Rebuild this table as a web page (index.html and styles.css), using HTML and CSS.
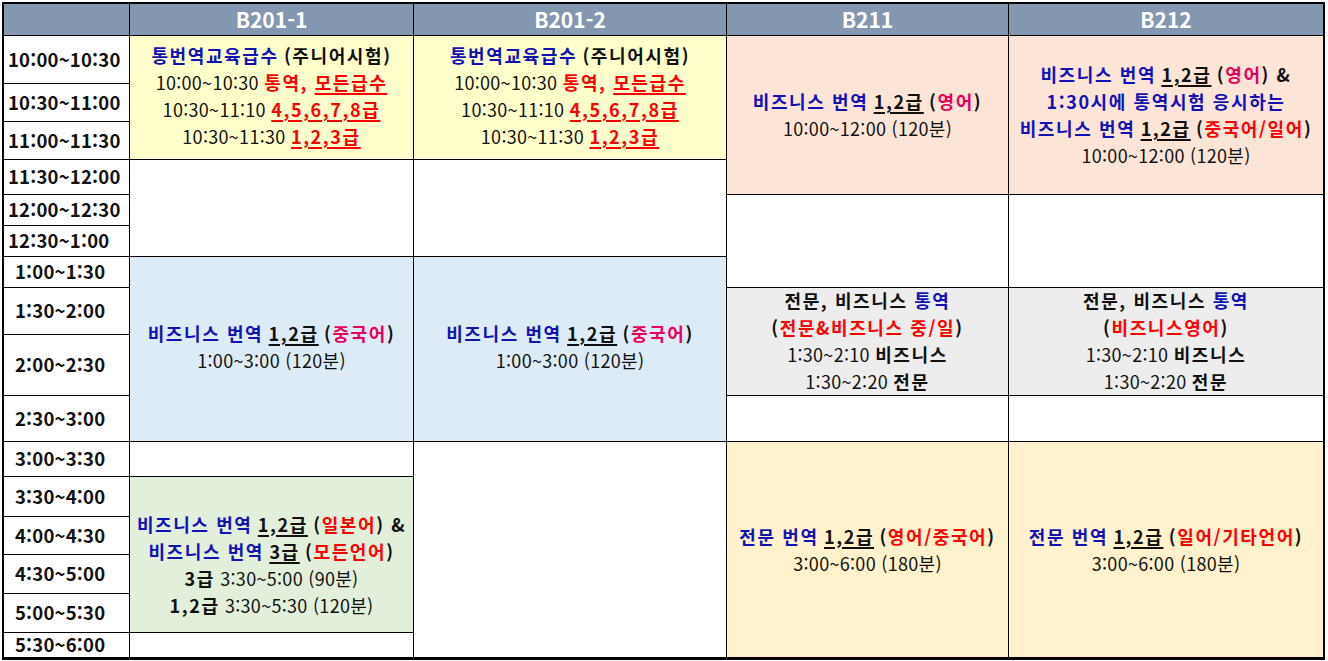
FILE: index.html
```html
<!DOCTYPE html>
<html lang="ko">
<head>
<meta charset="utf-8">
<title>시험 시간표</title>
<link rel="stylesheet" href="styles.css">
</head>
<body>
<div class="sheet">
  <div class="hd corner"></div>
  <div class="hd">B201-1</div>
  <div class="hd">B201-2</div>
  <div class="hd">B211</div>
  <div class="hd">B212</div>

  <div class="t r2">10:00~10:30</div>
  <div class="t r3">10:30~11:00</div>
  <div class="t r4">11:00~11:30</div>
  <div class="t r5">11:30~12:00</div>
  <div class="t r6">12:00~12:30</div>
  <div class="t r7">12:30~1:00</div>
  <div class="t r8 sp">1:00~1:30</div>
  <div class="t r9 sp">1:30~2:00</div>
  <div class="t r10 sp">2:00~2:30</div>
  <div class="t r11 sp">2:30~3:00</div>
  <div class="t r12 sp">3:00~3:30</div>
  <div class="t r13 sp">3:30~4:00</div>
  <div class="t r14 sp">4:00~4:30</div>
  <div class="t r15 sp">4:30~5:00</div>
  <div class="t r16 sp">5:00~5:30</div>
  <div class="t r17 sp">5:30~6:00</div>

  <!-- B201-1 -->
  <div class="c c2 yellow s-junior">
    <p><b class="blue">통번역교육급수</b> <b>(주니어시험)</b></p>
    <p>10:00~10:30 <b class="red">통역, <u>모든급수</u></b></p>
    <p>10:30~11:10 <b class="red"><u>4,5,6,7,8급</u></b></p>
    <p>10:30~11:30 <b class="red"><u>1,2,3급</u></b></p>
  </div>
  <div class="c c2 white s-lunch"></div>
  <div class="c c2 blue-bg s-biz">
    <p><b class="blue">비즈니스 번역</b> <b><u>1,2급</u></b> <b>(<span class="pink">중국어</span>)</b></p>
    <p>1:00~3:00 (120분)</p>
  </div>
  <div class="c c2 white s-r12"></div>
  <div class="c c2 green s-green">
    <p><b class="blue">비즈니스 번역</b> <b><u>1,2급</u></b> <b>(<span class="red">일본어</span>) &amp;</b></p>
    <p><b class="blue">비즈니스 번역</b> <b><u>3급</u></b> <b>(<span class="red">모든언어</span>)</b></p>
    <p><b>3급</b> 3:30~5:00 (90분)</p>
    <p><b>1,2급</b> 3:30~5:30 (120분)</p>
  </div>
  <div class="c c2 white s-r17"></div>

  <!-- B201-2 -->
  <div class="c c3 yellow s-junior">
    <p><b class="blue">통번역교육급수</b> <b>(주니어시험)</b></p>
    <p>10:00~10:30 <b class="red">통역, <u>모든급수</u></b></p>
    <p>10:30~11:10 <b class="red"><u>4,5,6,7,8급</u></b></p>
    <p>10:30~11:30 <b class="red"><u>1,2,3급</u></b></p>
  </div>
  <div class="c c3 white s-lunch"></div>
  <div class="c c3 blue-bg s-biz">
    <p><b class="blue">비즈니스 번역</b> <b><u>1,2급</u></b> <b>(<span class="pink">중국어</span>)</b></p>
    <p>1:00~3:00 (120분)</p>
  </div>
  <div class="c c3 white s-after"></div>

  <!-- B211 -->
  <div class="c c4 peach s-morning">
    <p><b class="blue">비즈니스 번역</b> <b><u>1,2급</u></b> <b>(<span class="pink">영어</span>)</b></p>
    <p>10:00~12:00 (120분)</p>
  </div>
  <div class="c c4 white s-mid"></div>
  <div class="c c4 gray s-interp">
    <p><b>전문, 비즈니스 </b><b class="blue">통역</b></p>
    <p><b>(<span class="red">전문&amp;비즈니스 중/일</span>)</b></p>
    <p>1:30~2:10 <b>비즈니스</b></p>
    <p>1:30~2:20 <b>전문</b></p>
  </div>
  <div class="c c4 white s-r11"></div>
  <div class="c c4 cream s-after">
    <p><b class="blue">전문 번역</b> <b><u>1,2급</u></b> <b>(<span class="red">영어/중국어</span>)</b></p>
    <p>3:00~6:00 (180분)</p>
  </div>

  <!-- B212 -->
  <div class="c c5 peach s-morning">
    <p><b class="blue">비즈니스 번역</b> <b><u>1,2급</u></b> <b>(<span class="pink">영어</span>) &amp;</b></p>
    <p><b class="blue">1:30시에 통역시험 응시하는</b></p>
    <p><b class="blue">비즈니스 번역</b> <b><u>1,2급</u></b> <b>(<span class="red">중국어/일어</span>)</b></p>
    <p>10:00~12:00 (120분)</p>
  </div>
  <div class="c c5 white s-mid"></div>
  <div class="c c5 gray s-interp">
    <p><b>전문, 비즈니스 </b><b class="blue">통역</b></p>
    <p><b>(<span class="red">비즈니스영어</span>)</b></p>
    <p>1:30~2:10 <b>비즈니스</b></p>
    <p>1:30~2:20 <b>전문</b></p>
  </div>
  <div class="c c5 white s-r11"></div>
  <div class="c c5 cream s-after">
    <p><b class="blue">전문 번역</b> <b><u>1,2급</u></b> <b>(<span class="red">일어/기타언어</span>)</b></p>
    <p>3:00~6:00 (180분)</p>
  </div>
</div>
</body>
</html>
```

FILE: styles.css
```css
html, body {
  margin: 0;
  padding: 0;
  background: #ffffff;
}

body {
  font-family: "Noto Sans CJK KR", "Noto Sans", sans-serif;
  color: #111;
}

.sheet {
  display: grid;
  grid-template-columns: 125px 283px 312px 281px 314px;
  grid-template-rows: 31px 47px 37px 37px 34px 30px 30px 30px 46px 60px 45px 34px 39px 37px 38px 38px 24px;
  gap: 1px;
  background: #000;
  border: 2px solid #000;
  border-bottom-width: 3px;
  width: max-content;
  margin: 2px 0 0 2px;
}

.hd {
  background: #8497b0;
  color: #fff;
  font-weight: 700;
  font-size: 21px;
  display: flex;
  align-items: center;
  justify-content: center;
  line-height: 1;
}

.t {
  grid-column: 1;
  background: #fff;
  font-weight: 700;
  font-size: 18.5px;
  color: #111;
  display: flex;
  align-items: center;
  padding-left: 4px;
  padding-bottom: 2px;
  letter-spacing: 0.2px;
}
.t.sp { padding-left: 11px; }

.r2 { grid-row: 2; } .r3 { grid-row: 3; } .r4 { grid-row: 4; } .r5 { grid-row: 5; }
.r6 { grid-row: 6; } .r7 { grid-row: 7; } .r8 { grid-row: 8; } .r9 { grid-row: 9; }
.r10 { grid-row: 10; } .r11 { grid-row: 11; } .r12 { grid-row: 12; } .r13 { grid-row: 13; }
.r14 { grid-row: 14; } .r15 { grid-row: 15; } .r16 { grid-row: 16; } .r17 { grid-row: 17; }

.c {
  display: flex;
  flex-direction: column;
  align-items: center;
  justify-content: center;
  text-align: center;
  font-size: 18px;
  line-height: 27px;
  letter-spacing: 0.3px;
  color: #111;
}
.c p { margin: 0; white-space: nowrap; }
.c b { font-weight: 700; letter-spacing: 1.6px; }
.c u { text-decoration-thickness: 1.5px; text-underline-offset: 3px; }

.c2 { grid-column: 2; }
.c3 { grid-column: 3; }
.c4 { grid-column: 4; }
.c5 { grid-column: 5; }

.s-junior { grid-row: 2 / 5; justify-content: flex-start; padding-top: 6px; }
.s-lunch { grid-row: 5 / 8; }
.s-biz { grid-row: 8 / 12; padding-bottom: 4px; }
.s-r12 { grid-row: 12; }
.s-green { grid-row: 13 / 17; padding-top: 20px; }
.s-r17 { grid-row: 17; }
.s-after { grid-row: 12 / 18; }
.s-morning { grid-row: 2 / 6; }
.s-mid { grid-row: 6 / 9; }
.s-interp { grid-row: 9 / 11; padding-bottom: 2px; }
.s-r11 { grid-row: 11; }

.white { background: #fff; }
.yellow { background: #ffffcc; }
.blue-bg { background: #ddebf7; }
.green { background: #e2efda; }
.peach { background: #fce4d6; }
.gray { background: #ededed; }
.cream { background: #fff2cc; }

.blue { color: #1212b4; }
.red { color: #ff0000; }
.pink { color: #e6005c; }
```
